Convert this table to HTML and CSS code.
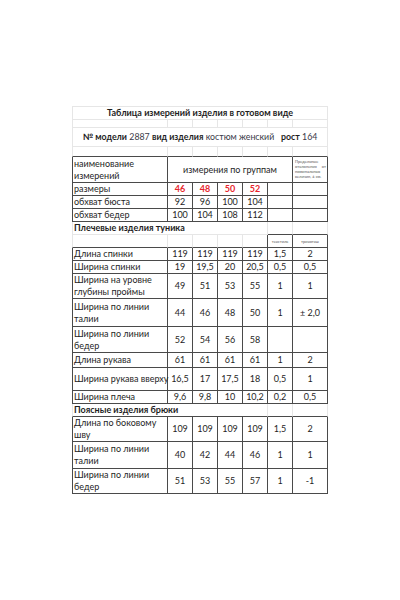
FILE: index.html
```html
<!DOCTYPE html>
<html lang="ru">
<head>
<meta charset="utf-8">
<title>Таблица измерений</title>
<link rel="stylesheet" href="styles.css">
</head>
<body>
<table class="sheet">
  <colgroup>
    <col class="c-name"><col class="c-s"><col class="c-s"><col class="c-s"><col class="c-s"><col class="c-s"><col class="c-t">
  </colgroup>
  <tr class="h-title top"><td colspan="7" class="title first">Таблица измерений изделия в готовом виде</td></tr>
  <tr class="h-gap1"><td class="first"></td><td></td><td></td><td></td><td></td><td></td><td></td></tr>
  <tr class="h-model"><td colspan="7" class="model first"><b>№ модели</b> <span class="val">2887</span> <b>вид изделия</b> <span class="val">костюм женский</span> &nbsp; <b>рост</b> <span class="val">164</span></td></tr>
  <tr class="h-gap2"><td class="first b"></td><td class="b"></td><td class="b"></td><td class="b"></td><td class="b"></td><td class="b"></td><td class="b"></td></tr>
  <tr class="d h-head">
    <td class="name">наименование<br>измерений</td>
    <td colspan="5" class="grp">измерения по группам</td>
    <td class="note">Предельные отклонения от номинальных величин, ± см.</td>
  </tr>
  <tr class="d h1"><td class="name">размеры</td><td class="red">46</td><td class="red">48</td><td class="red">50</td><td class="red">52</td><td></td><td></td></tr>
  <tr class="d h1"><td class="name">обхват бюста</td><td>92</td><td>96</td><td>100</td><td>104</td><td></td><td></td></tr>
  <tr class="d h1"><td class="name">обхват бедер</td><td>100</td><td>104</td><td>108</td><td>112</td><td></td><td></td></tr>
  <tr class="h1"><td colspan="5" class="sec first">Плечевые изделия туника</td><td class="b"></td><td class="b"></td></tr>
  <tr class="h1"><td class="first b"></td><td class="b"></td><td class="b"></td><td class="b"></td><td class="b r"></td><td class="tiny b r">текстиль</td><td class="tiny b r">трикотаж</td></tr>
  <tr class="d h1"><td class="name">Длина спинки</td><td>119</td><td>119</td><td>119</td><td>119</td><td>1,5</td><td>2</td></tr>
  <tr class="d h1"><td class="name">Ширина спинки</td><td>19</td><td>19,5</td><td>20</td><td>20,5</td><td>0,5</td><td>0,5</td></tr>
  <tr class="d h-pr"><td class="name">Ширина на уровне<br>глубины проймы</td><td>49</td><td>51</td><td>53</td><td>55</td><td>1</td><td>1</td></tr>
  <tr class="d h-ta"><td class="name">Ширина по линии<br>талии</td><td>44</td><td>46</td><td>48</td><td>50</td><td>1</td><td>± 2,0</td></tr>
  <tr class="d h-be"><td class="name">Ширина по линии<br>бедер</td><td>52</td><td>54</td><td>56</td><td>58</td><td></td><td></td></tr>
  <tr class="d h-ru"><td class="name">Длина рукава</td><td>61</td><td>61</td><td>61</td><td>61</td><td>1</td><td>2</td></tr>
  <tr class="d h-rv"><td class="name">Ширина рукава вверху</td><td>16,5</td><td>17</td><td>17,5</td><td>18</td><td>0,5</td><td>1</td></tr>
  <tr class="d h1"><td class="name">Ширина плеча</td><td>9,6</td><td>9,8</td><td>10</td><td>10,2</td><td>0,2</td><td>0,5</td></tr>
  <tr class="h1"><td colspan="5" class="sec first b">Поясные изделия брюки</td><td class="b"></td><td class="b"></td></tr>
  <tr class="d h-bs"><td class="name">Длина по боковому<br>шву</td><td>109</td><td>109</td><td>109</td><td>109</td><td>1,5</td><td>2</td></tr>
  <tr class="d h-ta2"><td class="name">Ширина по линии<br>талии</td><td>40</td><td>42</td><td>44</td><td>46</td><td>1</td><td>1</td></tr>
  <tr class="d h-be2"><td class="name">Ширина по линии<br>бедер</td><td>51</td><td>53</td><td>55</td><td>57</td><td>1</td><td>-1</td></tr>
</table>
</body>
</html>
```
FILE: styles.css
```css
html, body {
  margin: 0;
  padding: 0;
  background: #ffffff;
}

body {
  font-family: Lato, "Liberation Sans", sans-serif;
  font-size: 9px;
  color: #1e1e1e;
}

.sheet {
  border-collapse: separate;
  border-spacing: 0;
  table-layout: fixed;
  width: 256px;
  margin: 106px 0 0 72px;
}

.c-name { width: 96px; }
.c-s { width: 25px; }
.c-t { width: 35px; }

.sheet td {
  padding: 0;
  border-right: 1px solid #e6e6e6;
  border-bottom: 1px solid #e6e6e6;
  text-align: center;
  vertical-align: middle;
  line-height: 12px;
  white-space: nowrap;
  overflow: visible;
}

.sheet td.first {
  border-left: 1px solid #e6e6e6;
}

.sheet tr.top td {
  border-top: 1px solid #e6e6e6;
}

.sheet td.b {
  border-bottom-color: #4a4a4a;
}

.sheet td.r {
  border-right-color: #4a4a4a;
}

.sheet tr.d td {
  border-right-color: #4a4a4a;
  border-bottom-color: #4a4a4a;
}

.sheet tr.d td:first-child {
  border-left: 1px solid #4a4a4a;
}

.sheet td.name {
  text-align: left;
  padding-left: 1px;
}

.sheet td.title {
  font-weight: 700;
  font-size: 9px;
}

.sheet td.model {
  font-size: 8.8px;
}

.model b {
  font-weight: 700;
}

.model .val {
  color: #3a3a48;
}

.sheet td.sec {
  text-align: left;
  font-weight: 700;
  padding-left: 1px;
}

.sheet td.red {
  color: #e8262c;
  font-weight: 700;
}

.sheet td.note {
  white-space: normal;
  font-size: 4px;
  line-height: 5px;
  text-align: justify;
  vertical-align: top;
  padding: 2px 1px 0 2px;
  color: #555555;
}

.sheet td.tiny {
  font-size: 4px;
  line-height: 5px;
  color: #555555;
  vertical-align: middle;
}

.h-title { height: 14px; }
.h-gap1 { height: 8px; }
.h-model { height: 19px; }
.h-gap2 { height: 10px; }
.h-head { height: 26px; }
.h1 { height: 13px; }
.h-pr { height: 25px; }
.h-ta { height: 28px; }
.h-be { height: 26px; }
.h-ru { height: 15px; }
.h-rv { height: 23px; }
.h-bs { height: 24px; }
.h-ta2 { height: 27px; }
.h-be2 { height: 24px; }
```
